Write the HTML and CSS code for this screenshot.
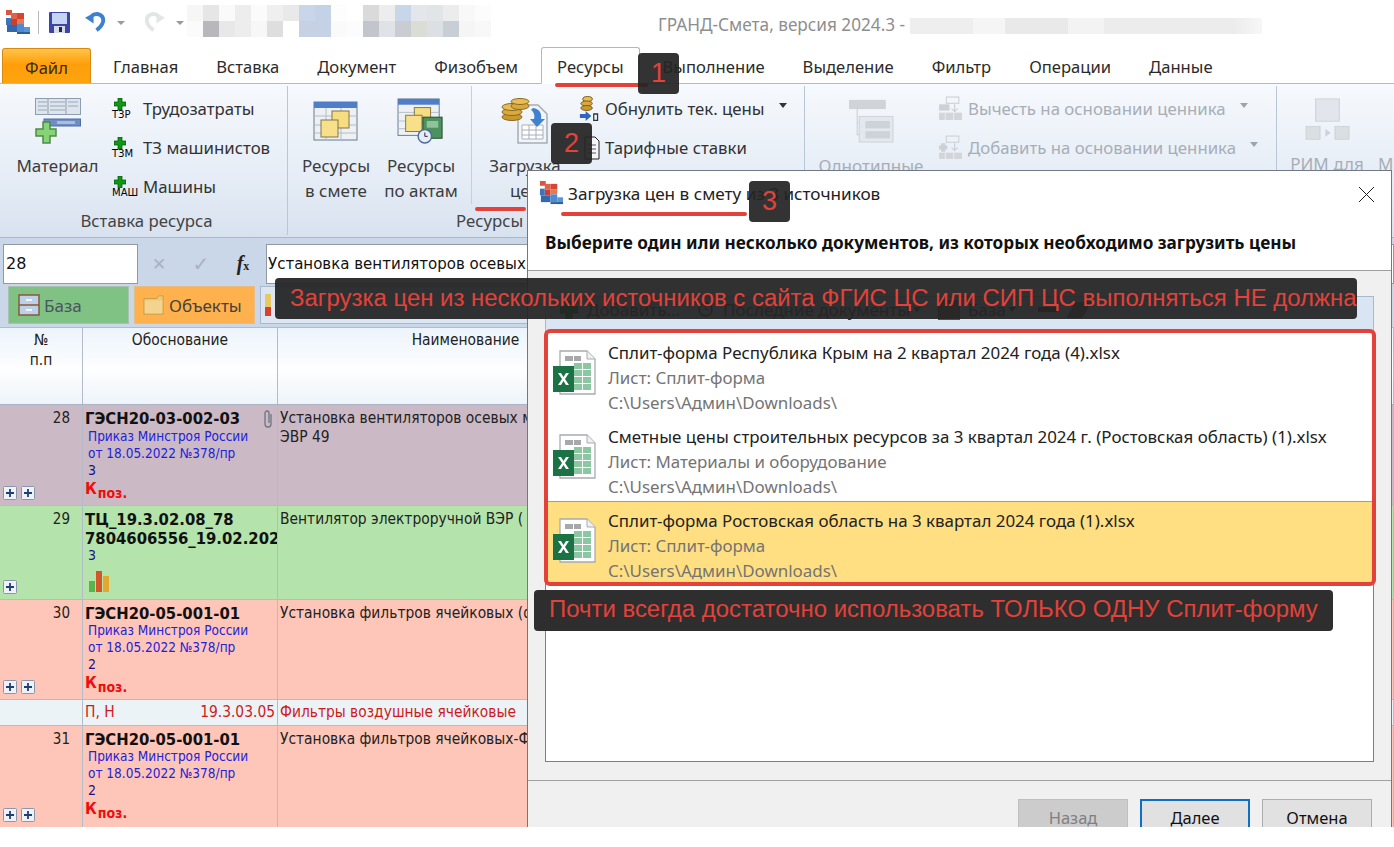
FILE: index.html
```html
<!DOCTYPE html>
<html lang="ru">
<head>
<meta charset="utf-8">
<title>ГРАНД-Смета</title>
<link rel="stylesheet" href="styles.css">
</head>
<body>
<svg class="defs" width="0" height="0" aria-hidden="true">
  <defs>
    <symbol id="logo" viewBox="0 0 26 26">
      <rect x="1" y="1" width="6" height="5" fill="#d9553f"/><rect x="6" y="4" width="6" height="6" fill="#e0624a"/>
      <rect x="12" y="4" width="7" height="6" fill="#d8452f"/><rect x="6" y="10" width="6" height="6" fill="#c8402f"/>
      <rect x="12" y="10" width="7" height="5" fill="#e37a55"/><rect x="1" y="9" width="5" height="7" fill="#3f74b8"/>
      <rect x="2" y="16" width="10" height="7" fill="#3268ae"/><rect x="12" y="15" width="7" height="8" fill="#4f8ad0"/>
      <rect x="19" y="18" width="6" height="7" fill="#5b95d8"/><rect x="12" y="23" width="13" height="2" fill="#2f5d9c"/>
    </symbol>
    <symbol id="save" viewBox="0 0 21 21">
      <rect width="21" height="21" rx="1" fill="#3c46a6"/><rect x="3" y="1" width="15" height="11" fill="#c6d3f2"/>
      <rect x="5" y="14" width="11" height="7" fill="#d8dbe6"/><rect x="10" y="15" width="3" height="5" fill="#22264f"/>
    </symbol>
    <symbol id="undo" viewBox="0 0 22 22">
      <path d="M7 5C13 1 20 4 19 11 18 15 15 18 12 20" fill="none" stroke="currentColor" stroke-width="4"/>
      <path d="M0 7l9-5v11z" fill="currentColor"/>
    </symbol>
    <symbol id="sheet-plus" viewBox="0 0 46 46">
      <rect x=".5" y=".5" width="45" height="16" fill="#dde4ee" stroke="#8f9db0"/>
      <path d="M3 4h9M3 8h9M3 12h9M15 4h15M15 8h15M15 12h15M33 4h10M33 8h10" stroke="#9aa7b8" fill="none"/>
      <path d="M13 16.500v-16M31 16.500v-16" stroke="#8f9db0"/>
      <rect x="9" y="21" width="36.500" height="7" fill="#6f8dc2" stroke="#4c6ca8"/>
      <path d="M22 24.500h18" stroke="#a9bddd" stroke-width="3"/>
      <path d="M8 24h7v7h6v7h-6v7H8v-7H1v-7h7z" fill="#86d476" stroke="#4d8b4a" stroke-width="1.5"/>
    </symbol>
    <symbol id="plus" viewBox="0 0 12 12">
      <path d="M4 0h4v4h4v4H8v4H4V8H0V4h4z" fill="#0d9a12" stroke="#064e0b" stroke-width=".7"/>
    </symbol>
    <symbol id="table-docs" viewBox="0 0 46 40">
      <rect x="1" y="1" width="43" height="38" fill="#eef1f4" stroke="#667a90"/><rect x="1" y="1" width="43" height="6" fill="#4f7dc8"/>
      <path d="M1 15h43M1 24h43M1 32h43M13 7v32M28 7v32" stroke="#b3bcc7"/>
      <rect x="19" y="10" width="17" height="17" fill="#f6dd80" stroke="#80744a"/><rect x="8" y="19" width="17" height="17" fill="#f8e08a" stroke="#80744a"/>
    </symbol>
    <symbol id="table-act" viewBox="0 0 50 48">
      <rect x="1" y="1" width="43" height="38" fill="#eef1f4" stroke="#667a90"/><rect x="1" y="1" width="43" height="6" fill="#4f7dc8"/>
      <path d="M1 15h43M1 24h43M1 32h43" stroke="#b3bcc7"/>
      <rect x="18" y="10" width="17" height="17" fill="#f6dd80" stroke="#80744a"/><rect x="9" y="18" width="17" height="17" fill="#f8e08a" stroke="#80744a"/>
      <rect x="27" y="20" width="20" height="22" fill="#4d9160" stroke="#1f4a2a"/><rect x="31" y="24" width="12" height="7" fill="#8fc49b"/>
      <circle cx="29" cy="40" r="7" fill="#e8ecf4" stroke="#4b6aa0" stroke-width="1.5"/><path d="M29 36v4h3" stroke="#222" fill="none"/>
    </symbol>
    <symbol id="coins-doc" viewBox="0 0 48 46">
      <path d="M17 7h20l9 9v29H17z" fill="#f2f5f8" stroke="#a6adb8" stroke-width="1.5"/>
      <path d="M21 27h21v14H21zM21 32h21M21 37h21M28 27v14M35 27v14" fill="#fff" stroke="#a8b0bb"/>
      <ellipse cx="11" cy="19" rx="10" ry="3.500" fill="#c9982f" stroke="#8a6a22"/><ellipse cx="11" cy="14" rx="10" ry="3.500" fill="#d9a93e" stroke="#8a6a22"/>
      <ellipse cx="11" cy="9" rx="10" ry="3.500" fill="#e8bd55" stroke="#8a6a22"/><ellipse cx="19" cy="8" rx="9" ry="3.500" fill="#d9a93e" stroke="#8a6a22"/>
      <ellipse cx="19" cy="3.500" rx="9" ry="3" fill="#e8bd55" stroke="#8a6a22"/>
      <path d="M32 10c7 1 9 6 8 11h4l-8 8-7-8h4c1-3 0-7-3-9z" fill="#3f82d0"/>
    </symbol>
    <symbol id="coins-zero" viewBox="0 0 22 25" preserveAspectRatio="none">
      <ellipse cx="10" cy="3" rx="5" ry="2.500" fill="#e8bd55" stroke="#7a5d1e"/><ellipse cx="9" cy="7.500" rx="6" ry="2.500" fill="#d9a93e" stroke="#7a5d1e"/><ellipse cx="9" cy="12" rx="6" ry="2.500" fill="#c9982f" stroke="#7a5d1e"/>
      <path d="M2 18h6v-3l6 5-6 5v-3H2z" fill="#2f66c0"/><path d="M16.500 18h4v6.500h-4z" fill="none" stroke="#333" stroke-width="1.300"/>
    </symbol>
    <symbol id="doc-rates" viewBox="0 0 16 24">
      <path d="M1 1h10l4 4v18H1z" fill="#f4f6f8" stroke="#222"/><path d="M4 9h8M4 13h8M4 17h8" stroke="#556"/>
    </symbol>
    <symbol id="gray-tree" viewBox="0 0 44 48" preserveAspectRatio="none">
      <rect x="0" y="1" width="36" height="10" fill="#d0d4d9"/><path d="M8 11v28h6M8 26h6" stroke="#c9ced4" fill="none"/>
      <rect x="10" y="19" width="33" height="28" fill="#e3e8ee" stroke="#cdd2d8"/><rect x="16" y="24" width="24" height="8" fill="#ced3d8"/><rect x="16" y="35" width="24" height="8" fill="#ced3d8"/>
    </symbol>
    <symbol id="gray-sub" viewBox="0 0 24 24">
      <rect x="8" y="1" width="12" height="6" fill="none" stroke="#cbd0d6"/><rect x="1" y="8" width="10" height="6" fill="#cdd1d6"/>
      <path d="M16 8v6m-3-2 3 3 3-3" stroke="#c5cad0" fill="none"/><rect x="1" y="16" width="22" height="7" fill="#d2d6db"/>
      <path d="M7 16v7M15 16v7" stroke="#e8edf2"/>
    </symbol>
    <symbol id="gray-add" viewBox="0 0 24 24">
      <rect x="8" y="1" width="12" height="6" fill="none" stroke="#cbd0d6"/><path d="M3 8h4v2h2v4H7v2H3v-2H1v-4h2z" fill="#cdd1d6"/>
      <path d="M16 8v6m-3-2 3 3 3-3" stroke="#c5cad0" fill="none"/><rect x="1" y="17" width="22" height="6" fill="#d2d6db"/>
      <path d="M7 17v6M15 17v6" stroke="#e8edf2"/>
    </symbol>
    <symbol id="gray-rim" viewBox="0 0 42 50" preserveAspectRatio="none">
      <rect x="10" y="1" width="22" height="26" fill="#e2e6ec" stroke="#cdd2d8"/><rect x="1" y="33" width="13" height="15" fill="#dadfe4" stroke="#cdd2d8"/>
      <rect x="28" y="33" width="13" height="15" fill="#dadfe4" stroke="#cdd2d8"/><path d="M19 36l5 4.500-5 4.500z" fill="#cdd2d8"/>
    </symbol>
    <symbol id="drawers" viewBox="0 0 22 22">
      <rect x="1" y="1" width="20" height="20" fill="#bcd0ea" stroke="#8a5a34" stroke-width="1.5"/><path d="M1 11h20" stroke="#8a5a34" stroke-width="1.5"/>
      <rect x="8" y="5" width="6" height="2" fill="#f4f6f8"/><rect x="8" y="15" width="6" height="2" fill="#f4f6f8"/>
    </symbol>
    <symbol id="folder" viewBox="0 0 24 22">
      <path d="M1 4h14l2-3h5v20H1z" fill="#eec878" stroke="#c79a4a"/><rect x="2" y="6" width="19" height="14" fill="#f3d38e"/>
    </symbol>
    <symbol id="clip" viewBox="0 0 12 20">
      <path d="M9 5v10a3 3 0 0 1-6 0V4a2 2 0 0 1 4 0v10" fill="none" stroke="#6d7480" stroke-width="1.3"/>
    </symbol>
    <symbol id="bars" viewBox="0 0 22 22">
      <rect x="1" y="11" width="6" height="11" fill="#59b44c"/><rect x="8" y="1" width="6" height="21" fill="#d2562a"/><rect x="15" y="6" width="6" height="16" fill="#e5a82e"/>
    </symbol>
    <symbol id="xl" viewBox="0 0 44 46">
      <path d="M7 1h27l8 8v35H7z" fill="#fff" stroke="#a8acb0" stroke-width="1.3"/><path d="M34 1v8h8" fill="#eef0f1" stroke="#a8acb0"/>
      <rect x="12" y="6" width="8" height="5" fill="#a6a8aa"/><rect x="21" y="6" width="7" height="5" fill="#a6a8aa"/>
      <path d="M21 13h8v6h-8zM30 13h8v6h-8zM21 20h8v6h-8zM30 20h8v6h-8zM21 27h8v6h-8zM30 27h8v6h-8zM21 34h8v6h-8zM30 34h8v6h-8z" fill="#8cc6a2"/>
      <rect x="0" y="16" width="21" height="26" fill="#1b7245"/>
      <path d="M5 23l3 0 2.500 4 2.500-4 3 0-4 6 4 6-3 0-2.500-4-2.500 4-3 0 4-6z" fill="#fff"/>
    </symbol>
    <symbol id="pbox" viewBox="0 0 14 14">
      <rect x=".5" y=".5" width="13" height="13" rx="1" fill="#eef2f7" stroke="#8a97aa"/><path d="M7 3v8M3 7h8" stroke="#1f3f73" stroke-width="1.8"/>
    </symbol>
    <symbol id="clock" viewBox="0 0 16 16"><circle cx="8" cy="8" r="6" fill="none" stroke="#222" stroke-width="1.6"/><path d="M8 4v4h3" stroke="#222" fill="none"/></symbol>
  </defs>
</svg>

<div class="app">
  <header class="titlebar">
    <svg class="ic-logo"><use href="#logo"/></svg>
    <span class="qsep"></span>
    <svg class="ic-save"><use href="#save"/></svg>
    <svg class="ic-undo"><use href="#undo"/></svg>
    <span class="qarrow"></span>
    <svg class="ic-redo"><use href="#undo"/></svg>
    <span class="qarrow qarrow-end"></span>
    <svg class="mosaic" width="304" height="32" viewBox="0 0 19 2" preserveAspectRatio="none">
      <g shape-rendering="crispEdges">
        <rect x="0" width="1" height="1" fill="#f6f6f6"/><rect x="1" width="1" height="1" fill="#e6e6e6"/><rect x="2" width="1" height="1" fill="#fafafa"/><rect x="3" width="1" height="1" fill="#ededed"/><rect x="4" width="1" height="1" fill="#fbfbfb"/><rect x="5" width="1" height="1" fill="#efefef"/><rect x="6" width="1" height="1" fill="#e9e9e9"/><rect x="7" width="1" height="1" fill="#c9d6ea"/><rect x="8" width="1" height="1" fill="#c4d2e8"/><rect x="9" width="1" height="1" fill="#fdfdfd"/><rect x="11" width="1" height="1" fill="#dadada"/><rect x="12" width="1" height="1" fill="#ededed"/><rect x="13" width="1" height="1" fill="#c8d6ea"/><rect x="14" width="1" height="1" fill="#e3e6ea"/><rect x="15" width="1" height="1" fill="#e2e5e8"/><rect x="16" width="1" height="1" fill="#ececec"/><rect x="17" width="1" height="1" fill="#f8f8f8"/><rect x="18" width="1" height="1" fill="#fcfcfc"/>
        <rect x="0" y="1" width="1" height="1" fill="#fbfbfb"/><rect x="1" y="1" width="1" height="1" fill="#b8b8bc"/><rect x="2" y="1" width="1" height="1" fill="#e8e8e8"/><rect x="3" y="1" width="1" height="1" fill="#ededed"/><rect x="4" y="1" width="1" height="1" fill="#f7f7f7"/><rect x="5" y="1" width="1" height="1" fill="#dedede"/><rect x="7" y="1" width="1" height="1" fill="#c6d2e4"/><rect x="8" y="1" width="1" height="1" fill="#c5d2e6"/><rect x="9" y="1" width="1" height="1" fill="#fafafa"/><rect x="10" y="1" width="1" height="1" fill="#fcfcfc"/><rect x="11" y="1" width="1" height="1" fill="#c2c6cc"/><rect x="12" y="1" width="1" height="1" fill="#dfe3e8"/><rect x="13" y="1" width="1" height="1" fill="#c9cdd2"/><rect x="14" y="1" width="1" height="1" fill="#dadcd6"/><rect x="15" y="1" width="1" height="1" fill="#dcdfe4"/><rect x="16" y="1" width="1" height="1" fill="#c8ced6"/><rect x="17" y="1" width="1" height="1" fill="#f5f5f5"/><rect x="18" y="1" width="1" height="1" fill="#f8f8f8"/>
      </g>
    </svg>
    <span class="apptitle">ГРАНД-Смета, версия 2024.3 -</span>
    <span class="blurbar"></span>
  </header>

  <nav class="tabs">
    <span class="tab tab-file">Файл</span>
    <span class="tab">Главная</span>
    <span class="tab">Вставка</span>
    <span class="tab">Документ</span>
    <span class="tab">Физобъем</span>
    <span class="tab tab-on">Ресурсы</span>
    <span class="tab">Выполнение</span>
    <span class="tab">Выделение</span>
    <span class="tab">Фильтр</span>
    <span class="tab">Операции</span>
    <span class="tab">Данные</span>
  </nav>

  <section class="ribbon">
    <div class="group group-a">
      <div class="group-body">
        <div class="big big-mat">
          <svg class="big-ic ic-mat"><use href="#sheet-plus"/></svg>
          <span class="big-t">Материал</span>
        </div>
        <div class="smalls">
          <div class="small"><span class="tag"><svg class="ic-plus"><use href="#plus"/></svg><b>ТЗР</b></span>Трудозатраты</div>
          <div class="small"><span class="tag"><svg class="ic-plus"><use href="#plus"/></svg><b>ТЗМ</b></span>ТЗ машинистов</div>
          <div class="small"><span class="tag"><svg class="ic-plus"><use href="#plus"/></svg><b>МАШ</b></span>Машины</div>
        </div>
      </div>
      <div class="group-label">Вставка ресурса</div>
    </div>
    <div class="group group-b">
      <div class="group-body">
        <div class="big big-res">
          <svg class="big-ic ic-table"><use href="#table-docs"/></svg>
          <span class="big-t">Ресурсы<br>в смете</span>
        </div>
        <div class="big big-res big-act">
          <svg class="big-ic ic-act"><use href="#table-act"/></svg>
          <span class="big-t">Ресурсы<br>по актам</span>
        </div>
        <span class="rsep"></span>
        <div class="big big-load">
          <svg class="big-ic ic-load"><use href="#coins-doc"/></svg>
          <span class="big-t">Загрузка<br>цен</span>
        </div>
        <div class="smalls smalls-b">
          <div class="small"><span class="tag tag-b"><svg class="ic-zero"><use href="#coins-zero"/></svg></span>Обнулить тек. цены<i class="drop"></i></div>
          <div class="small"><span class="tag tag-b"><svg class="ic-rates"><use href="#doc-rates"/></svg></span>Тарифные ставки</div>
        </div>
      </div>
      <div class="group-label">Ресурсы и цены</div>
    </div>
    <div class="group group-c off">
      <div class="group-body">
        <div class="big big-same">
          <svg class="big-ic ic-tree"><use href="#gray-tree"/></svg>
          <span class="big-t">Однотипные</span>
        </div>
        <div class="smalls">
          <div class="small"><span class="tag tag-c"><svg class="ic-gray"><use href="#gray-sub"/></svg></span>Вычесть на основании ценника<i class="drop"></i></div>
          <div class="small"><span class="tag tag-c"><svg class="ic-gray"><use href="#gray-add"/></svg></span>Добавить на основании ценника<i class="drop"></i></div>
        </div>
      </div>
    </div>
    <div class="group group-d off">
      <div class="group-body">
        <div class="big big-rim">
          <svg class="big-ic ic-rim"><use href="#gray-rim"/></svg>
          <span class="big-t">РИМ для</span>
        </div>
        <span class="big-t big-m">М</span>
      </div>
    </div>
  </section>

  <section class="formula">
    <div class="input input-num">28</div>
    <span class="fx-x">✕</span>
    <span class="fx-ok">✓</span>
    <span class="fx-f"><i>f</i><small>x</small></span>
    <div class="input input-text">Установка вентиляторов осевых массой до 0,3 т</div>
  </section>

  <section class="basebar">
    <div class="bbtn bbtn-base"><svg class="ic-bb"><use href="#drawers"/></svg><span>База</span></div>
    <div class="bbtn bbtn-obj"><svg class="ic-bb"><use href="#folder"/></svg><span>Объекты</span></div>
    <div class="bbtn bbtn-3"><span class="ic-ruler"></span></div>
  </section>

  <section class="sheet">
    <div class="row row-head">
      <div class="cell">№<br>п.п</div>
      <div class="cell">Обоснование</div>
      <div class="cell head-name">Наименование</div>
    </div>
    <div class="row row-28">
      <div class="cell num"><span>28</span><span class="pboxes"><svg class="ic-p"><use href="#pbox"/></svg><svg class="ic-p"><use href="#pbox"/></svg></span></div>
      <div class="cell code"><b>ГЭСН20-03-002-03</b><svg class="ic-clip"><use href="#clip"/></svg><span class="ord">Приказ Минстроя России</span><span class="ord">от 18.05.2022 №378/пр</span><span class="cnt">3</span><span class="k">К<sub>поз.</sub></span></div>
      <div class="cell name">Установка вентиляторов осевых массой<br>ЭВР 49</div>
    </div>
    <div class="row row-29">
      <div class="cell num"><span>29</span><span class="pboxes"><svg class="ic-p"><use href="#pbox"/></svg></span></div>
      <div class="cell code"><b>ТЦ_19.3.02.08_78</b><b>7804606556_19.02.2024</b><span class="cnt">3</span><svg class="ic-bars"><use href="#bars"/></svg></div>
      <div class="cell name">Вентилятор электроручной ВЭР (</div>
    </div>
    <div class="row row-30">
      <div class="cell num"><span>30</span><span class="pboxes"><svg class="ic-p"><use href="#pbox"/></svg><svg class="ic-p"><use href="#pbox"/></svg></span></div>
      <div class="cell code"><b>ГЭСН20-05-001-01</b><span class="ord">Приказ Минстроя России</span><span class="ord">от 18.05.2022 №378/пр</span><span class="cnt">2</span><span class="k">К<sub>поз.</sub></span></div>
      <div class="cell name">Установка фильтров ячейковых (ф</div>
    </div>
    <div class="row row-sub">
      <div class="cell"></div>
      <div class="cell subcode"><span>П, Н</span><span>19.3.03.05</span></div>
      <div class="cell subname">Фильтры воздушные ячейковые</div>
    </div>
    <div class="row row-31">
      <div class="cell num"><span>31</span><span class="pboxes"><svg class="ic-p"><use href="#pbox"/></svg><svg class="ic-p"><use href="#pbox"/></svg></span></div>
      <div class="cell code"><b>ГЭСН20-05-001-01</b><span class="ord">Приказ Минстроя России</span><span class="ord">от 18.05.2022 №378/пр</span><span class="cnt">2</span><span class="k">К<sub>поз.</sub></span></div>
      <div class="cell name">Установка фильтров ячейковых-Ф</div>
    </div>
  </section>
</div>

<div class="dialog">
  <div class="dlg-head">
    <div class="dlg-title"><svg class="ic-dlglogo"><use href="#logo"/></svg><span>Загрузка цен в смету из 3 источников</span><span class="dlg-close"><svg width="17" height="17" viewBox="0 0 17 17"><path d="M1 1l15 15M16 1L1 16" stroke="#222" fill="none"/></svg></span></div>
    <div class="dlg-hint">Выберите один или несколько документов, из которых необходимо загрузить цены</div>
  </div>
  <div class="dlg-body">
    <div class="dlg-tools">
      <span class="tool tool-add"><svg class="ic-toolplus"><use href="#plus"/></svg>Добавить...</span>
      <span class="tool"><svg class="ic-clock"><use href="#clock"/></svg>Последние документы<i class="drop"></i></span>
      <span class="tool tool-db"><span class="ic-dbbox"></span>База<i class="drop"></i></span>
      <span class="tool tool-ends"><span class="ic-minus"></span><span class="ic-eraser"></span></span>
    </div>
    <div class="dlg-list">
      <div class="doc">
        <svg class="ic-xl"><use href="#xl"/></svg>
        <div><p>Сплит-форма Республика Крым на 2 квартал 2024 года (4).xlsx</p><p class="mute">Лист: Сплит-форма</p><p class="mute">C:\Users\Админ\Downloads\</p></div>
      </div>
      <div class="doc">
        <svg class="ic-xl"><use href="#xl"/></svg>
        <div><p>Сметные цены строительных ресурсов за 3 квартал 2024 г. (Ростовская область) (1).xlsx</p><p class="mute">Лист: Материалы и оборудование</p><p class="mute">C:\Users\Админ\Downloads\</p></div>
      </div>
      <div class="doc doc-on">
        <svg class="ic-xl"><use href="#xl"/></svg>
        <div><p>Сплит-форма Ростовская область на 3 квартал 2024 года (1).xlsx</p><p class="mute">Лист: Сплит-форма</p><p class="mute">C:\Users\Админ\Downloads\</p></div>
      </div>
    </div>
  </div>
  <div class="dlg-foot">
    <span class="btn btn-off">Назад</span>
    <span class="btn btn-def">Далее</span>
    <span class="btn">Отмена</span>
  </div>
</div>

<div class="mark-line line-1"></div>
<div class="mark-line line-2"></div>
<div class="mark-line line-3"></div>
<div class="frame"></div>
<div class="badge badge-1">1</div>
<div class="badge badge-2">2</div>
<div class="badge badge-3">3</div>
<div class="note note-1">Загрузка цен из нескольких источников с сайта ФГИС ЦС или СИП ЦС выполняться НЕ должна</div>
<div class="note note-2">Почти всегда достаточно использовать ТОЛЬКО ОДНУ Сплит-форму</div>
</body>
</html>
```
FILE: styles.css
```css
* { box-sizing: border-box; }
html, body { margin: 0; padding: 0; }
body { width: 1394px; height: 847px; overflow: hidden; background: #fff; position: relative; font-family: "Noto Sans", sans-serif; color: #222; }
.defs { position: absolute; }
.app { width: 1394px; height: 827px; overflow: hidden; display: flex; flex-direction: column; }

/* title bar */
.titlebar { height: 42px; display: flex; align-items: flex-start; flex: none; }
.ic-logo { width: 26px; height: 26px; margin: 9px 0 0 5px; }
.qsep { width: 1px; height: 23px; background: #b8b8b8; margin: 11px 0 0 7px; }
.ic-save { width: 21px; height: 21px; margin: 12px 0 0 10px; }
.ic-undo { width: 21px; height: 21px; margin: 11px 0 0 15px; color: #3d7fd0; }
.qarrow { width: 0; height: 0; border: 4px solid transparent; border-top: 4px solid #9a9a9a; border-bottom: 0; margin: 21px 0 0 11px; }
.ic-redo { width: 21px; height: 21px; margin: 11px 0 0 19px; color: #e3e5e6; transform: scaleX(-1); }
.qarrow-end { margin-left: 11px; }
.mosaic { margin: 5px 0 0 3px; flex: none; }
.apptitle { font-size: 17.2px; color: #8e8e8e; margin: 14px 0 0 167px; white-space: nowrap; line-height: 22px; }
.blurbar { width: 352px; height: 16px; margin: 18px 0 0 5px; background: linear-gradient(90deg, #eee 0 18%, #f5f5f5 18% 27%, #e9e9e9 27% 45%, #f3f3f3 45% 55%, #ececec 55% 92%, #f7f7f7); }

/* tabs */
.tabs { height: 42px; flex: none; display: flex; align-items: flex-end; padding-left: 2px; border-bottom: 1px solid #adbbcc; font-size: 16.6px; line-height: 40px; color: #2b2b2b; }
.tab { padding: 0 19px; height: 36px; white-space: nowrap; }
.tab-file { width: 89px; height: 35px; line-height: 38px; padding: 0; margin-right: 3px; text-align: center; border: 1px solid #d88a10; border-bottom: 0; border-radius: 3px 3px 0 0; background: linear-gradient(#ffc44a, #ff9e0a 45%, #fda40f); color: #3a2a10; }
.tab-on { padding: 0 15px; margin: 0 4px; background: #fff; border: 1px solid #a9b8cb; border-bottom: 1px solid #fff; border-radius: 3px 3px 0 0; height: 37px; margin-bottom: -1px; position: relative; line-height: 38px; }

/* ribbon */
.ribbon { height: 154px; flex: none; display: flex; background: linear-gradient(#f6f9fd, #e6edf6 60%, #d8e2ef); border-bottom: 1px solid #a9b8cb; }
.group { display: flex; flex-direction: column; border-right: 1px solid #b9c6d6; margin: 2px 0 2px; flex: none; }
.group-body { height: 122px; display: flex; }
.group-label { height: 26px; line-height: 26px; text-align: center; font-size: 16.8px; color: #444; white-space: nowrap; }
.group-a { width: 288px; padding-left: 15px; }
.group-a .group-label { margin-left: -15px; padding-left: 6px; }
.group-b { width: 517px; padding-left: 8px; }
.group-b .group-label { margin-left: -8px; padding-right: 51px; }
.group-c { width: 472px; }
.group-d { flex: 1; border-right: 0; }
.big { display: flex; flex-direction: column; align-items: center; flex: none; }
.big-ic { display: block; }
.big-t { font-size: 17px; line-height: 25px; text-align: center; white-space: nowrap; color: #3c3c3c; }
.big-mat { width: 85px; }
.ic-mat { width: 46px; height: 46px; margin: 12px 0 9px; }
.big-res { width: 80px; }
.big-act { margin-left: 5px; }
.ic-table { width: 46px; height: 40px; margin: 15px 0 12px; }
.ic-act { width: 48px; height: 46px; margin: 12px 0 9px; }
.rsep { width: 1px; height: 118px; background: #c5d0dd; margin-left: 10px; flex: none; }
.big-load { width: 90px; margin-left: 8px; }
.ic-load { width: 48px; height: 46px; margin: 12px 0 9px; }
.smalls { margin-left: 10px; padding-top: 3px; font-size: 16.8px; color: #333; white-space: nowrap; }
.smalls-b { margin-left: 8px; }
.small { height: 39px; display: flex; align-items: center; }
.tag { width: 33px; display: flex; flex-direction: column; align-items: flex-start; padding-left: 2px; line-height: 8px; flex: none; }
.tag b { font-family: "DejaVu Sans", sans-serif; font-size: 10px; font-weight: 400; color: #000; line-height: 9px; }
.tag-b { width: 27px; padding-left: 0; }
.tag-c { width: 30px; padding-left: 0; }
.ic-plus { width: 12px; height: 12px; margin-left: 2px; }
.ic-zero { width: 21px; height: 25px; }
.ic-rates { width: 16px; height: 24px; margin-left: 6px; }
.ic-gray { width: 25px; height: 25px; }
.drop { width: 0; height: 0; border: 4px solid transparent; border-top: 5px solid #333; border-bottom: 0; margin: -6px 0 0 14px; display: inline-block; }
.off .big-t, .off .small { color: #a7aeb6; }
.off .drop { border-top-color: #9da4ac; }
.big-same { width: 104px; margin-left: 14px; }
.ic-tree { width: 45px; height: 44px; margin: 13px 0 10px; }
.group-c .smalls { margin-left: 15px; }
.big-rim { width: 100px; }
.ic-rim { width: 45px; height: 43px; margin: 12px 0 10px; }
.big-m { padding-top: 65px; margin-left: 1px; }

/* formula bar */
.formula { height: 47px; flex: none; background: #c9d7e8; display: flex; align-items: flex-start; padding: 6px 0 0 3px; }
.input { height: 40px; background: #fff; border: 1px solid #8f99a6; font-size: 16px; line-height: 37px; padding-left: 2px; color: #111; white-space: nowrap; overflow: hidden; font-family: "DejaVu Sans", sans-serif; }
.input-num { width: 135px; }
.input-text { flex: 1; margin-left: 11px; padding-left: 1px; font-stretch: condensed; font-size: 16.7px; }
.fx-x { width: 20px; margin-left: 11px; text-align: center; color: #a9b3be; font-size: 17px; font-weight: 700; line-height: 40px; font-family: "DejaVu Sans", sans-serif; }
.fx-ok { width: 20px; margin-left: 22px; text-align: center; color: #a9b3be; font-size: 20px; font-weight: 700; line-height: 40px; font-family: "DejaVu Sans", sans-serif; }
.fx-f { width: 24px; margin-left: 20px; font-family: "Liberation Serif", serif; font-size: 20px; line-height: 38px; font-weight: 700; text-align: center; color: #222; }
.fx-f small { font-size: 12px; }

/* base tabs */
.basebar { height: 42px; flex: none; display: flex; gap: 5px; padding: 1px 0 0 8px; background: #c9d7e8; font-size: 17px; }
.bbtn { width: 121px; height: 38px; display: flex; align-items: center; gap: 4px; padding-left: 9px; color: #4a5560; border: 1px solid #a9c2b0; }
.bbtn-base { background: #80c283; }
.bbtn-obj { background: #ffb14d; border-color: #e6bb84; padding-left: 8px; gap: 4px; color: #46423a; }
.bbtn-3 { width: 280px; background: #dce6f2; border-color: #a9b8cb; padding-left: 4px; }
.ic-ruler { width: 6px; height: 22px; background: linear-gradient(#e8c860 0 60%, #d8402f 60%); }
.ic-bb { width: 22px; height: 22px; flex: none; }

/* grid */
.sheet { flex: 1; font-family: "DejaVu Sans", sans-serif; font-stretch: condensed; font-size: 15.4px; color: #222; background: #fff; }
.row { display: grid; grid-template-columns: 83px 195px 1fr; border-bottom: 1px solid #b4bcc6; }
.cell { border-right: 1px solid #b3bdc9; overflow: hidden; white-space: nowrap; position: relative; }
.row-head { height: 78px; text-align: center; background: linear-gradient(#ecf4fb, #fdfeff 55%, #eef4fa); border-top: 1px solid #b4bcc6; line-height: 20px; border-bottom-color: #a9b5c4; }
.row-head .cell { padding-top: 2px; }
.row-head .head-name { padding-right: 740px; }
.row-28 { height: 101px; background: #cbb9c6; }
.row-29 { height: 94px; background: #b4e4ab; }
.row-30, .row-31 { height: 100px; background: #fec6b8; }
.row-31 { height: 102px; }
.row-sub { height: 26px; background: #ebf3f7; color: #cf1a1a; line-height: 25px; }
.num { display: flex; flex-direction: column; justify-content: space-between; text-align: right; padding: 4px 12px 4px 3px; font-size: 15px; line-height: 18px; }
.pboxes { display: flex; gap: 4px; height: 15px; }
.ic-p { width: 14px; height: 14px; }
.code { display: flex; flex-direction: column; align-items: flex-start; padding: 4px 0 0 2px; line-height: 19px; }
.code b { font-family: "DejaVu Sans", sans-serif; font-size: 16.5px; font-stretch: condensed; color: #111; }
.code b + .ord, .code b + .cnt { margin-top: -1px; }
.ord { color: #2222d8; font-size: 13.5px; line-height: 17px; padding-left: 3px; }
.cnt { color: #14148c; font-size: 14px; line-height: 17px; padding-left: 3px; }
.k { color: #ef0d0d; font-weight: 700; font-size: 16px; line-height: 19px; }
.k sub { font-size: 14px; vertical-align: -4px; line-height: 0; margin-left: 1px; }
.ic-clip { position: absolute; right: 3px; top: 4px; width: 12px; height: 20px; }
.ic-bars { width: 22px; height: 22px; margin: 6px 0 0 3px; }
.name { padding: 4px 0 0 2px; line-height: 19px; }
.subcode { display: flex; justify-content: space-between; padding: 0 2px 0 2px; }
.subname { padding-left: 2px; }

/* dialog */
.dialog { position: absolute; left: 527px; top: 170px; width: 865px; height: 657px; overflow: hidden; background: #f0f0f0; border: 1px solid #6f7884; border-bottom: 0; display: flex; flex-direction: column; color: #222; }
.dlg-head { height: 100px; background: #fff; border-bottom: 1px solid #a0a0a0; flex: none; }
.dlg-title { height: 45px; display: flex; align-items: center; font-size: 17.15px; padding-left: 11px; position: relative; }
.ic-dlglogo { width: 25px; height: 25px; margin: -2px 4px 0 0; }
.dlg-close { margin-left: auto; margin-right: 16px; height: 17px; }
.dlg-hint { font-size: 17.2px; font-weight: 700; padding: 15px 0 0 17px; color: #111; white-space: nowrap; }
.dlg-body { height: 510px; flex: none; padding: 25px 17px 0; border-bottom: 1px solid #a0a0a0; }
.dlg-tools { height: 35px; background: #dae5f3; border: 1px solid #a9b8cb; border-bottom: 0; display: flex; align-items: center; gap: 17px; padding: 0 0 9px 14px; font-size: 17px; color: #333; }
.tool { display: flex; align-items: center; gap: 9px; white-space: nowrap; }
.tool .drop { margin: 0 0 0 -6px; }
.ic-toolplus { width: 18px; height: 18px; }
.ic-clock { width: 17px; height: 17px; }
.ic-dbbox { width: 22px; height: 20px; border: 1px solid #6a4a2a; background: #8a6a4a; }
.tool-db { gap: 8px; }
.tool-ends { gap: 14px; margin-left: 5px; }
.ic-minus { width: 19px; height: 5px; background: #8c1f1f; }
.ic-eraser { width: 16px; height: 16px; background: #666; transform: skewX(-30deg); }
.dlg-list { height: 431px; background: #fff; border: 1px solid #7f7f7f; padding-top: 1px; }
.doc { height: 84px; display: flex; padding: 7px 0 0 7px; font-size: 16.93px; line-height: 25px; white-space: nowrap; }
.doc p { margin: 0; color: #222; }
.doc .mute { color: #747474; }
.ic-xl { width: 44px; height: 46px; margin: 10px 11px 0 0; flex: none; }
.doc-on { background: #ffdf82; box-shadow: inset 0 1px 0 #c79a3e; }
.dlg-foot { flex: 1; display: flex; gap: 12px; padding: 18px 0 0 490px; }
.btn { width: 110px; height: 40px; background: #e1e1e1; border: 1px solid #adadad; text-align: center; font-size: 16.5px; line-height: 35px; color: #111; flex: none; }
.btn-off { background: #cccccc; border-color: #bfbfbf; color: #808080; }
.btn-def { border: 2px solid #0f6fc0; line-height: 33px; }

/* annotations */
.mark-line { position: absolute; background: #e2423a; border-radius: 3px; height: 4px; }
.line-1 { left: 555px; top: 83px; width: 93px; }
.line-2 { left: 475px; top: 207px; width: 51px; }
.line-3 { left: 561px; top: 212px; width: 186px; }
.frame { position: absolute; left: 544px; top: 329px; width: 832px; height: 257px; border: 4px solid #e2423a; border-radius: 6px; }
.badge { position: absolute; width: 41px; height: 41px; border-radius: 4px; background: rgba(36, 36, 36, .93); color: #e2423a; font: 27px/41px "Liberation Sans", sans-serif; text-align: center; }
.badge-1 { left: 638px; top: 53px; }
.badge-2 { left: 551px; top: 123px; }
.badge-3 { left: 749px; top: 181px; }
.note { position: absolute; background: rgba(36, 36, 36, .94); color: #e2423a; font-family: "Liberation Sans", sans-serif; white-space: nowrap; border-radius: 4px; height: 41px; line-height: 39px; }
.note-1 { left: 275px; top: 278px; width: 1082px; padding-left: 15px; font-size: 23.95px; }
.note-2 { left: 534px; top: 590px; width: 799px; padding-left: 15px; font-size: 23.95px; line-height: 38px; background: #2e2e2e; }
```
